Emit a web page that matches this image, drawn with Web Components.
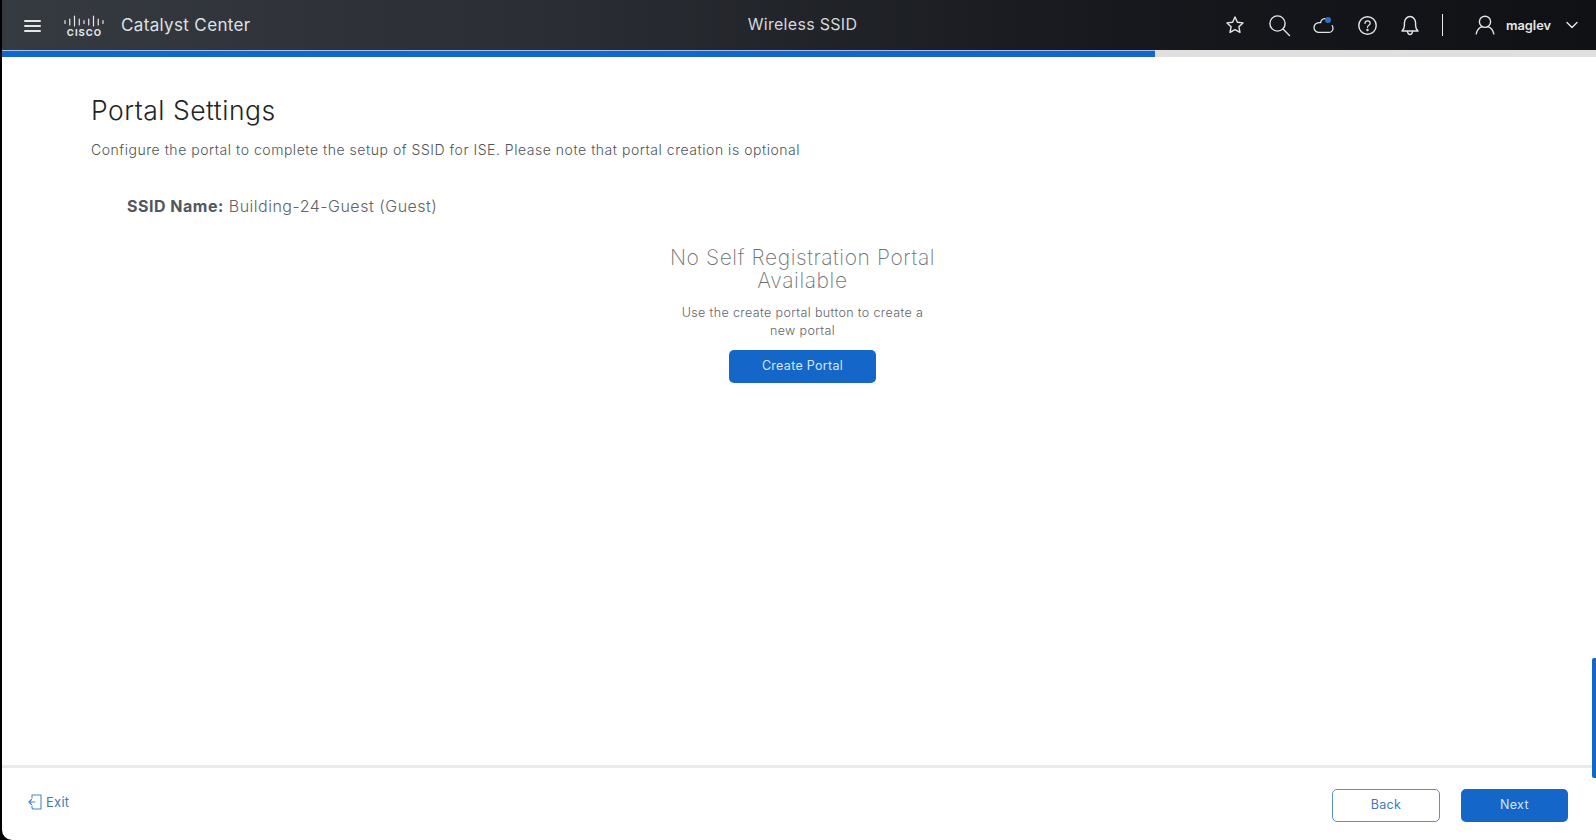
<!DOCTYPE html>
<html lang="en"><head><meta charset="utf-8"><title>Wireless SSID</title>
<style>
html,body{margin:0;height:100%;background:#000;overflow:hidden}
body{font-family:Inter,"Open Sans",sans-serif}
</style></head><body>
<app-shell>
  <top-bar slot="top" product="Catalyst Center" page="Wireless SSID" user="maglev"></top-bar>
  <progress-line slot="top" value="72.36"></progress-line>
  <portal-page></portal-page>
  <wizard-footer slot="bottom"></wizard-footer>
</app-shell>
<script>
function def(name,html){
  customElements.define(name,class extends HTMLElement{
    connectedCallback(){
      if(this.shadowRoot)return;
      const r=this.attachShadow({mode:'open'});
      r.innerHTML=typeof html==='function'?html(this):html;
    }
  });
}
const ic=(w,h,vb,body,sw=1.4)=>`<svg width="${w}" height="${h}" viewBox="${vb}" fill="none" stroke="currentColor" stroke-width="${sw}" stroke-linecap="round" stroke-linejoin="round">${body}</svg>`;

def('app-shell',`<style>
:host{display:flex;flex-direction:column;height:840px;margin-left:2px;background:#fff;border-bottom-left-radius:10px;overflow:hidden;position:relative}
main{flex:1;min-height:0;display:flex;flex-direction:column}
.tab{position:absolute;right:0;top:658px;width:4px;height:120px;background:#1467c8;border-radius:2px 0 0 2px}
</style><slot name="top"></slot><main><slot></slot></main><slot name="bottom"></slot><div class="tab"></div>`);

def('top-bar',h=>`<style>
:host{display:flex;align-items:center;height:50px;flex:none;color:#e4e6e8;position:relative;background:linear-gradient(90deg,#363a41 0,#2a2d33 35%,#16181d 70%,#0f1115 100%);font-family:Inter,sans-serif}
.burger{display:flex;margin:1px 0 0 22px}
.logo{display:flex;margin-left:22px}
.prod{margin-left:17px;font-size:17px;font-weight:400;letter-spacing:.35px;color:#dfe1e3}
.page{position:absolute;left:7px;right:0;top:0;height:48px;display:flex;align-items:center;justify-content:center;font-size:16px;letter-spacing:.3px;color:#d5d7da;pointer-events:none}
.right{margin-left:auto;display:flex;align-items:center;height:100%}
.right svg{display:block}
.i{display:flex}
.sep{width:1px;height:22px;background:#e8e8e8;margin:0 .5px 0 23px}
.user{font-size:12.8px;font-weight:600;margin-left:11px;color:#e6e7e9}
</style>
<span class="burger">${ic(18,14,'0 0 18 14','<path d="M1 2h15M1 7h15M1 12h15"/>',2)}</span>
<span class="logo"><svg width="40" height="21" viewBox="0 0 40 21" fill="none" stroke="#e6e7e9" stroke-width="1.200" stroke-linecap="round"><path d="M1 5.500v3M5.750 4v6M10.500 1v10M15.250 4v6M20 5.500v3M24.750 4v6M29.500 1v10M34.250 4v6M39 5.500v3"/><text x="20.500" y="20.500" text-anchor="middle" font-family="Inter,sans-serif" font-weight="700" font-size="9.500" letter-spacing="1" fill="#e6e7e9" stroke="none">CISCO</text></svg></span>
<span class="prod">${h.getAttribute('product')}</span>
<span class="page">${h.getAttribute('page')}</span>
<span class="right">
 <span class="i" style="margin-right:22px">${ic(20,20,'0 0 20 20','<path d="M10 2l2.400 5.200 5.600.7-4.100 3.900 1.100 5.600L10 14.600l-5 2.800 1.100-5.600L2 7.900l5.600-.7z"/>')}</span>
 <span class="i" style="margin-right:22px">${ic(24,24,'0 0 24 24','<circle cx="10.500" cy="10.500" r="7.600"/><path d="M16 16l6.500 6.500"/>')}</span>
 <span class="i" style="margin-right:24px"><svg width="21" height="18" viewBox="0 0 21 18" fill="none" stroke="currentColor" stroke-width="1.300" stroke-linecap="round"><path d="M14.500 3.500C11.500 1.500 8 3.200 7.600 6.600 3.600 6.200 1 8.600 1 11.400 1 14.200 3.300 16.400 6 16.400h9.500c2.500 0 4.500-1.700 4.500-4 0-1-.2-1.900-.8-2.700"/><circle cx="15" cy="4" r="3" fill="#2a6fd0" stroke="none"/></svg></span>
 <span class="i" style="margin-right:24px">${ic(19,19,'0 0 19 19','<circle cx="9.500" cy="9.500" r="8.700"/><path d="M7 7.400c0-1.500 1.100-2.500 2.600-2.500S12.200 5.900 12.200 7.200c0 2-2.700 2-2.700 4.100" stroke-width="1.200"/><circle cx="9.500" cy="14" r=".5" fill="currentColor"/>')}</span>
 <span class="i">${ic(18,21,'0 0 18 21','<path d="M1 16c1.600-1.400 2.400-3 2.400-5.500V8c0-3.500 2.400-6.500 5.600-6.500s5.600 3 5.600 6.500v2.500c0 2.500.8 4.100 2.400 5.500z"/><path d="M6.500 16.500c.2 2 1.200 3 2.500 3s2.300-1 2.500-3"/>')}</span>
 <span class="sep"></span>
 <span class="i" style="margin-left:31px">${ic(20,20,'0 0 20 20','<circle cx="10" cy="6.800" r="5.600"/><path d="M1.200 18.800c.9-3.800 3-6.200 5.500-7M18.800 18.800c-.9-3.800-3-6.200-5.500-7"/>')}</span>
 <span class="user">${h.getAttribute('user')}</span>
 <span class="i" style="margin-left:15px;margin-right:18px">${ic(12,8,'0 0 12 8','<path d="M1 1.500l5 5 5-5"/>')}</span>
</span>`);

def('progress-line',h=>`<style>
:host{display:block;height:7px;flex:none;background:#dfdfdf}
.fill{height:100%;width:${h.getAttribute('value')}%;background:#1467c8;box-shadow:inset 0 1px 0 #9cc3ee}
</style><div class="fill"></div>`);

def('portal-page',`<style>
:host{display:flex;flex-direction:column;flex:1;color:#5b6066;font-family:Inter,sans-serif;padding:37px 0 0 89px;box-sizing:border-box}
h1{margin:0;font-size:26.500px;line-height:32px;font-weight:300;color:#202428;letter-spacing:.5px}
.desc{margin:14px 0 0;font-size:14px;line-height:20px;letter-spacing:.53px;font-weight:300;color:#4f5459}
.ssid{margin:35px 0 0 36px;font-size:16px;line-height:22px;letter-spacing:.5px;color:#5f6469;font-weight:300}
.ssid b{font-weight:700;color:#52575c;letter-spacing:.5px}
empty-state{margin-left:-82px}
</style>
<h1>Portal Settings</h1>
<p class="desc">Configure the portal to complete the setup of SSID for ISE. Please note that portal creation is optional</p>
<div class="ssid"><b>SSID Name:</b> Building-24-Guest (Guest)</div>
<empty-state title-text="No Self Registration Portal Available" text="Use the create portal button to create a new portal" action="Create Portal"></empty-state>`);

def('empty-state',h=>`<style>
:host{display:flex;flex-direction:column;align-items:center;margin-top:29px;text-align:center}
h2{margin:0;width:290px;font-size:21px;line-height:23px;font-weight:200;color:#6f7378;letter-spacing:.6px}
p{margin:12px 0 0;width:252px;font-size:12.500px;line-height:18px;letter-spacing:.38px;color:#5f6469;font-weight:300}
ui-button{margin-top:10px}
</style><h2>${h.getAttribute('title-text')}</h2><p>${h.getAttribute('text')}</p><ui-button kind="primary">${h.getAttribute('action')}</ui-button>`);

def('ui-button',`<style>
:host{display:inline-flex;align-items:center;justify-content:center;box-sizing:border-box;width:147px;height:33px;padding-bottom:2px;border-radius:5px;font-family:Inter,sans-serif;font-size:12.500px;letter-spacing:.3px;background:#1467c8;color:#d6e6f8}
:host([kind=secondary]){background:#fff;color:#3e78c0;border:1.500px solid #5c90cc;width:108px}
:host([wide]){width:107px}
</style><slot></slot>`);

def('wizard-footer',`<style>
:host{display:flex;align-items:flex-start;flex:none;height:75px;box-sizing:border-box;border-top:3px solid #e9e9e9;padding:21px 28px 0 26px;font-family:Inter,sans-serif}
.exit{display:flex;align-items:center;gap:4px;color:#3e78c0;font-size:13px;letter-spacing:.25px;margin-top:5px}
.btns{margin-left:auto;display:flex;gap:21px}
</style>
<span class="exit"><svg width="14" height="16" viewBox="0 0 14 16" fill="none" stroke="#4a86cf" stroke-width="1.100" stroke-linecap="round" stroke-linejoin="round"><path d="M4 4V1h9v14H5l-1-1v-2"/><path d="M7 8H1M3.500 5.500L1 8l2.500 2.500"/></svg>Exit</span>
<span class="btns"><ui-button kind="secondary">Back</ui-button><ui-button kind="primary" wide>Next</ui-button></span>`);
</script>
</body></html>
